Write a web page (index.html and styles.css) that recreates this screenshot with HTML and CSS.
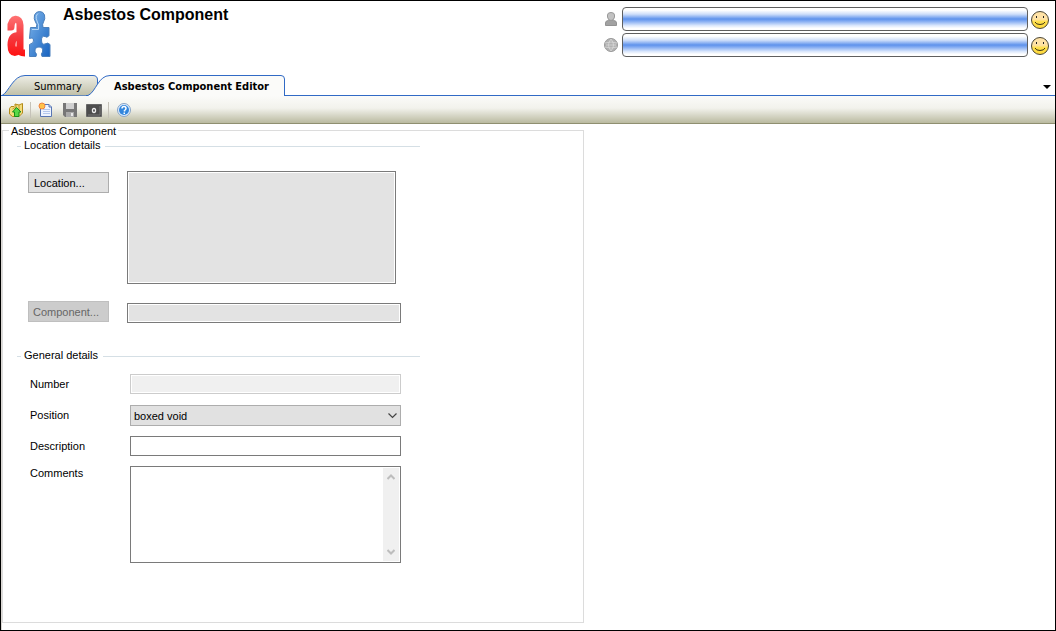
FILE: index.html
```html
<!DOCTYPE html>
<html lang="en">
<head>
<meta charset="utf-8">
<title>Asbestos Component</title>
<link rel="stylesheet" href="styles.css">
</head>
<body>
<div class="window">
  <header class="header">
    <svg class="logo" width="44" height="50" viewBox="0 0 44 50" aria-hidden="true">
      <defs>
        <linearGradient id="red" gradientUnits="userSpaceOnUse" x1="0" y1="7" x2="0" y2="48"><stop offset="0" stop-color="#ff7272"/><stop offset=".5" stop-color="#f43a40"/><stop offset="1" stop-color="#ff1010"/></linearGradient>
        <linearGradient id="blue" x1="0" y1="0" x2="1" y2="1"><stop offset="0" stop-color="#7db4ea"/><stop offset="1" stop-color="#1763c0"/></linearGradient>
      </defs>
      <g fill="none" stroke="url(#red)" stroke-width="7" stroke-linejoin="round">
        <path d="M.500 18H4C4 8 13 8 13 16V41Q13 44 18 44"/>
        <path d="M12 27C7 27 4.500 30 4.500 36C4.500 46 11 44 12 38" stroke-width="8"/>
      </g>
      <path d="M23.500 18.500H29.500Q30.500 15 28.500 13Q26.500 10 27.500 6Q29 2.500 32.500 2.500Q36.500 2.500 37.500 6Q38.500 10 36.500 13Q35 15 36 18.500H42V26.500Q40.500 29.500 38 27.500Q34.500 26.500 34.500 31Q34.500 36 38 35Q40.500 33 43 35.500V47.500H35Q33.500 45 35.500 43Q36.500 38 32 38Q27.500 38 28 43Q30.500 45 29 47.500H22.500V35.500Q27.500 34 26.500 31Q26 28 22.500 29.500Z" fill="url(#blue)" stroke="#4a80bd"/>
      <path d="M25 20.500H31.500Q32.500 16 30 12Q28 7 31 4.500" fill="none" stroke="#b5d6f6"/>
    </svg>
    <h1 class="title">Asbestos Component</h1>
    <div class="status">
      <div class="status-row">
        <svg width="14" height="16" viewBox="0 0 14 16" aria-hidden="true"><path d="M1.500 14.500V12Q1.500 9.500 4.500 9.500H9.500Q12.500 9.500 12.500 12V14.500Z" fill="#a2a2a2" stroke="#929292"/><path d="M3.500 4Q3.500 1.500 7 1.500T10.500 4V6Q10 9.500 7 9.500T3.500 6Z" fill="#c2c2c2" stroke="#999"/></svg>
        <input class="status-field" type="text" aria-label="User" readonly>
        <svg class="smile" width="20" height="20" viewBox="0 0 20 20" aria-hidden="true"><defs><linearGradient id="face" x1="0" y1="0" x2="0" y2="1"><stop offset=".45" stop-color="#ffe2a6"/><stop offset=".6" stop-color="#ffe04a"/><stop offset="1" stop-color="#ffd83c"/></linearGradient></defs><circle cx="10" cy="10" r="8.500" fill="url(#face)" stroke="#4a4636"/><path d="M6 6h1v2H6zM13 6h1v2h-1z" fill="#222"/><path d="M5 12Q6 14.500 10 14.500T15 12" fill="none" stroke="#3c3414"/></svg>
      </div>
      <div class="status-row">
        <svg width="14" height="16" viewBox="0 0 14 16" aria-hidden="true"><circle cx="7" cy="8" r="6.500" fill="#b2b2b2" stroke="#999"/><path d="M7 2Q2 8 7 14M7 2Q12 8 7 14M1 6Q7 4 13 6M1 10Q7 12 13 10M2 8H12" fill="none" stroke="#dcdcdc" stroke-width=".7"/></svg>
        <input class="status-field" type="text" aria-label="Site" readonly>
        <svg class="smile" width="20" height="20" viewBox="0 0 20 20" aria-hidden="true"><circle cx="10" cy="10" r="8.500" fill="url(#face)" stroke="#4a4636"/><path d="M6 6h1v2H6zM13 6h1v2h-1z" fill="#222"/><path d="M5 12Q6 14.500 10 14.500T15 12" fill="none" stroke="#3c3414"/></svg>
      </div>
    </div>
  </header>

  <nav class="tabs">
    <button class="tab tab-summary" type="button">
      <svg class="tab-shape" width="98" height="21" viewBox="0 0 98 21" aria-hidden="true"><defs><linearGradient id="tabg" x1="0" y1="0" x2="0" y2="1"><stop offset="0" stop-color="#eeeee6"/><stop offset="1" stop-color="#bebea6"/></linearGradient></defs><path d="M1 20.500C8 17 12 .500 24 .500H92Q96.500 .500 96.500 5V21Z" fill="url(#tabg)" stroke="#316ac5"/></svg>
      <span class="tab-text">Summary</span>
    </button>
    <button class="tab tab-active" type="button">
      <svg class="tab-shape" width="200" height="21" viewBox="0 0 200 21" aria-hidden="true"><path d="M0 20.500H2C10 17 12 .500 24 .500H195Q198.500 .500 198.500 4V21H0Z" fill="#fbfbf9"/><path d="M0 20.500H2C10 17 12 .500 24 .500H195Q198.500 .500 198.500 4V21" fill="none" stroke="#316ac5"/></svg>
      <span class="tab-text">Asbestos Component Editor</span>
    </button>
    <button class="tab-menu" type="button" aria-label="Tab list"><svg width="8" height="4" viewBox="0 0 8 4"><path d="M0 0H8L4 4Z"/></svg></button>
  </nav>

  <div class="toolbar" role="toolbar">
    <button class="tool" type="button" aria-label="Open folder"><svg width="16" height="16" viewBox="0 0 16 16"><path d="M1.500 6.500L3 4.500H6L7 3.500V2L11 3L14.500 1.500V11L11 14.500H4.500L1.500 12Z" fill="#f3dc7c" stroke="#b38a18"/><path d="M4.500 7L8 5V3M11 3V8" stroke="#c39c30" fill="none"/><path d="M8.500 5.500L13 10H11V14.500H6.500V10H4.500Z" fill="#58d848" stroke="#158f18"/></svg></button>
    <span class="tool-sep"></span>
    <button class="tool" type="button" aria-label="New"><svg width="16" height="16" viewBox="0 0 16 16"><path d="M2.500 2.500H11L13.500 5V14.500H2.500Z" fill="#eef4ff" stroke="#5876b4"/><path d="M11 2.500V5H13.500" fill="#cad8f4" stroke="#5876b4"/><path d="M5 7.500H12M5 9.500H12M5 11.500H12" stroke="#b4c8ee"/><circle cx="4" cy="4" r="3" fill="#ffc34a" stroke="#ee8340"/></svg></button>
    <button class="tool" type="button" aria-label="Save"><svg width="16" height="16" viewBox="0 0 16 16"><path d="M1 1H15V15H3L1 13Z" fill="#777"/><path d="M4 1H12V7H4Z" fill="#d0d0d0"/><path d="M4 10H12V15H4Z" fill="#aaa"/><path d="M9 11H11V14H9Z" fill="#e8e8e8"/></svg></button>
    <button class="tool" type="button" aria-label="Picture"><svg width="16" height="16" viewBox="0 0 16 16"><path d="M.500 2.500H15.500V14.500H.500Z" fill="#4d4d4d" stroke="#666"/><path d="M2 13H14V4" stroke="#777" fill="none"/><ellipse cx="8" cy="8.500" rx="1.500" ry="2" fill="#333" stroke="#eee" stroke-width="1.400"/></svg></button>
    <span class="tool-sep"></span>
    <button class="tool" type="button" aria-label="Help"><svg width="16" height="16" viewBox="0 0 16 16"><circle cx="8" cy="8" r="6.500" fill="#dcecff" stroke="#8aa4c4"/><circle cx="8" cy="8" r="5" fill="#3286dd"/><path d="M6 6.500Q6 4.500 8 4.500T10 6.500Q10 7.500 8.500 8.500V9.500" fill="none" stroke="#fff" stroke-width="1.500"/><path d="M7.500 10.500H9V12H7.500Z" fill="#fff"/></svg></button>
  </div>

  <main class="content">
    <fieldset class="group">
      <legend>Asbestos Component</legend>
      <fieldset class="section">
        <legend>Location details</legend>
        <div class="location-grid">
          <button class="btn" type="button">Location...</button>
          <textarea class="field location-box" aria-label="Location" readonly></textarea>
          <button class="btn" type="button" disabled>Component...</button>
          <input class="field component-box" type="text" aria-label="Component" readonly>
        </div>
      </fieldset>
      <fieldset class="section section-general">
        <legend>General details</legend>
        <div class="general-grid">
          <label for="number">Number</label>
          <input class="field" id="number" type="text" disabled>
          <label for="position">Position</label>
          <div class="select-wrap">
            <select class="select" id="position"><option>boxed void</option></select>
            <svg class="chevron" width="9" height="6" viewBox="0 0 9 6" aria-hidden="true"><path d="M.500 .500L4.500 4.500L8.500 .500" fill="none" stroke="#444" stroke-width="1.200"/></svg>
          </div>
          <label for="description">Description</label>
          <input class="field" id="description" type="text">
          <label class="label-top" for="comments">Comments</label>
          <div class="comments">
            <textarea class="comments-text" id="comments"></textarea>
            <div class="scroll">
              <svg width="8" height="6" viewBox="0 0 8 6" aria-hidden="true"><path d="M.500 5L4 1.500L7.500 5" fill="none" stroke="#bdbdbd" stroke-width="2"/></svg>
              <svg width="8" height="6" viewBox="0 0 8 6" aria-hidden="true"><path d="M.500 1L4 4.500L7.500 1" fill="none" stroke="#bdbdbd" stroke-width="2"/></svg>
            </div>
          </div>
        </div>
      </fieldset>
    </fieldset>
  </main>
</div>
</body>
</html>
```
FILE: styles.css
```css
* { box-sizing: border-box; }
body { margin: 0; background: #fff; color: #000; font: 11px/12px "Liberation Sans", Arial, sans-serif; }
button, input, select, textarea { font: inherit; color: inherit; margin: 0; border-radius: 0; }
svg { display: block; flex: none; }

.window { display: flex; flex-direction: column; min-height: 100vh; border: 1px solid #000; }

.header { display: flex; align-items: flex-start; height: 74px; padding: 6px 5px 0 6px; }
.logo { margin-top: 2px; }
.title { flex: 1; margin: 0 0 0 12px; font: bold 16px/16px "Liberation Sans", Arial, sans-serif; }
.status { display: flex; flex-direction: column; gap: 2px; width: 446px; }
.status-row { display: flex; align-items: center; }
.status-field {
  flex: 1; min-width: 0; height: 24px; margin: 0 2px 0 4px; padding: 0 6px;
  border: 1px solid #5f5f5f; border-radius: 4px;
  background: linear-gradient(#fff 10%, #cfdffa 28%, #5e92ec 50%, #84acf2 60%, #dce8fc 80%, #fff 92%);
}
.smile { margin-top: 1px; }

.tabs { display: flex; height: 21px; border-bottom: 1px solid #316ac5; }
.tab { position: relative; height: 21px; padding: 1px 0 0; border: 0; background: none; font: 11px/22px "DejaVu Sans Condensed", "DejaVu Sans", sans-serif; text-align: left; }
.tab-shape { position: absolute; left: 0; top: 0; }
.tab-text { position: relative; }
.tab-summary { width: 98px; padding-left: 33px; }
.tab-active { width: 200px; margin-left: -13px; padding-left: 28px; font-weight: bold; white-space: nowrap; }
.tab-menu { margin-left: auto; padding: 4px 4px 0; border: 0; background: none; }

.toolbar { display: flex; align-items: center; gap: 8px; height: 28px; padding: 1px 7px 0; border-bottom: 1px solid #8f8f70; background: linear-gradient(#fbfbf9, #f2f2ec 45%, #babaa0); }
.tool { padding: 0; border: 0; background: none; }
.tool-sep { width: 1px; height: 16px; margin: 0 -1px 0 -2px; background: #c5c2b8; }

.content { display: flex; flex: 1; padding: 0 0 7px; border-left: 1px solid #dcd8d4; }
.group { flex: 0 1 582px; min-width: 0; margin: 0; padding: 2px 14px 0; border: 1px solid #dcdcdc; }
.group > legend { margin-left: -8px; padding: 1px 2px 0; }
.section { width: 403px; margin: 0; padding: 0 0 0 11px; border: 0 solid #d5dfe5; border-top-width: 1px; }
.section > legend { margin-left: -7px; padding: 0 5px 2px 3px; }
.section-general { margin-top: 26px; }

.location-grid { display: grid; grid-template-columns: 81px 274px; column-gap: 18px; row-gap: 17px; padding-top: 18px; align-items: start; }
.btn { height: 21px; margin-top: 1px; padding: 1px 5px 0; border: 1px solid #adadad; background: #e1e1e1; text-align: left; }
.btn:disabled { margin-top: 0; padding-left: 4px; border-color: #bfbfbf; background: #ccc; color: #666; }
.field { display: block; width: 100%; height: 20px; padding: 1px 3px; border: 1px solid #7a7a7a; background: #fff; outline: 0; resize: none; }
.field:read-only { background: #e3e3e3; box-shadow: inset 0 0 0 1px #fff; }
.field:disabled { border-color: #ccc; background: #f0f0f0; }
.location-box { width: 269px; height: 113px; }
.component-box { margin-top: 2px; }

.general-grid { display: grid; grid-template-columns: 90px 271px; column-gap: 10px; row-gap: 10px; padding: 11px 0 0 2px; align-items: center; }
.label-top { align-self: start; padding-top: 1px; }
.select-wrap { position: relative; padding-top: 1px; }
.select { display: block; width: 100%; height: 21px; padding: 1px 20px 0 3px; border: 1px solid #adadad; background: #e1e1e1; appearance: none; }
.chevron { position: absolute; right: 4px; top: 9px; pointer-events: none; }
.comments { display: flex; height: 97px; padding: 1px; border: 1px solid #7a7a7a; }
.comments-text { flex: 1; min-width: 0; padding: 2px; border: 0; outline: 0; resize: none; overflow: hidden; }
.scroll { display: flex; flex-direction: column; justify-content: space-between; align-items: center; width: 16px; padding: 6px 0; background: #f0f0f0; }
```
